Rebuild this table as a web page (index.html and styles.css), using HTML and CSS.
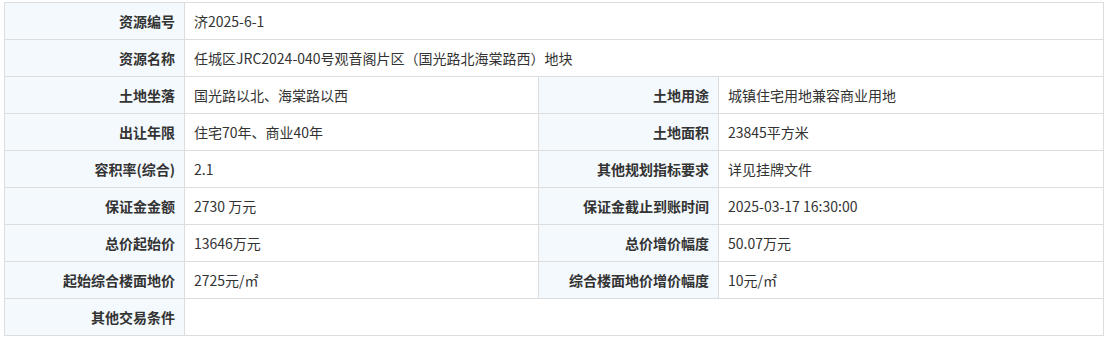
FILE: index.html
```html
<!DOCTYPE html>
<html lang="zh-CN">
<head>
<meta charset="utf-8">
<title>资源信息</title>
<link rel="stylesheet" href="styles.css">
</head>
<body>
<table class="info">
  <colgroup>
    <col class="c-label"><col class="c-val1"><col class="c-label"><col class="c-val2">
  </colgroup>
  <tbody>
    <tr><th>资源编号</th><td colspan="3">济2025-6-1</td></tr>
    <tr><th>资源名称</th><td colspan="3">任城区JRC2024-040号观音阁片区（国光路北海棠路西）地块</td></tr>
    <tr><th>土地坐落</th><td>国光路以北、海棠路以西</td><th>土地用途</th><td>城镇住宅用地兼容商业用地</td></tr>
    <tr><th>出让年限</th><td>住宅70年、商业40年</td><th>土地面积</th><td>23845平方米</td></tr>
    <tr><th>容积率(综合)</th><td>2.1</td><th>其他规划指标要求</th><td>详见挂牌文件</td></tr>
    <tr><th>保证金金额</th><td>2730 万元</td><th>保证金截止到账时间</th><td>2025-03-17 16:30:00</td></tr>
    <tr><th>总价起始价</th><td>13646万元</td><th>总价增价幅度</th><td>50.07万元</td></tr>
    <tr><th>起始综合楼面地价</th><td>2725元/㎡</td><th>综合楼面地价增价幅度</th><td>10元/㎡</td></tr>
    <tr><th>其他交易条件</th><td colspan="3"></td></tr>
  </tbody>
</table>
</body>
</html>
```
FILE: styles.css
```css
html, body {
  margin: 0;
  padding: 0;
  background: #fff;
}
body {
  padding: 2px 0 0 4px;
  font-family: "Noto Sans CJK SC", "Microsoft YaHei", sans-serif;
  font-size: 14px;
  color: #333;
}
.info {
  border-collapse: collapse;
  table-layout: fixed;
  width: 1100px;
}
.c-label { width: 180px; }
.c-val1 { width: 354px; }
.info th,
.info td {
  border: 1px solid #dddddd;
  height: 37px;
  padding: 0 9px;
  box-sizing: border-box;
  line-height: 20px;
  vertical-align: middle;
  white-space: nowrap;
}
.info th {
  background: #f3f9fd;
  text-align: right;
  font-weight: bold;
  color: #333;
}
.info td {
  text-align: left;
  font-weight: normal;
  color: #333;
}
```
